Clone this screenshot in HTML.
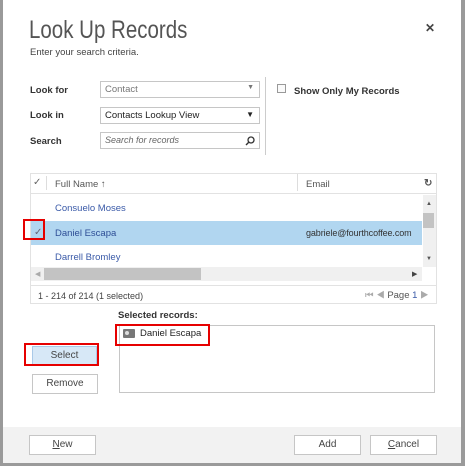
<!DOCTYPE html>
<html><head><style>
*{box-sizing:border-box;margin:0;padding:0}
body{width:465px;height:466px;background:#fff;font-family:"Liberation Sans",sans-serif;position:relative;overflow:hidden;color:#444}
.a{position:absolute}
.lbl{font-size:9.5px;font-weight:bold;color:#333}
.box{border:1px solid #c6c6c6;background:#fff;font-size:9.5px;padding:2px 4px}
.btn{border:1px solid #c6c6c6;background:#fff;font-size:10px;text-align:center;line-height:18px;color:#444}
.red{border:2px solid #e60000}
.row{font-size:9.5px;color:#3a5aa8;left:55px}
</style></head><body>
<div class="a" style="left:0;top:0;width:3px;height:466px;background:#9a9a9a"></div>
<div class="a" style="right:0;top:0;width:4px;height:466px;background:#9a9a9a"></div>
<div class="a" style="left:0;bottom:0;width:465px;height:3px;background:#9a9a9a"></div>
<div class="a" style="left:3px;top:427px;width:458px;height:36px;background:#f2f2f2"></div>

<div class="a" style="left:29px;top:16px;font-size:25px;color:#555;transform:scaleX(0.82);transform-origin:0 0;white-space:nowrap">Look Up Records</div>
<div class="a" style="left:30px;top:47px;font-size:9.5px;color:#444">Enter your search criteria.</div>
<div class="a" style="left:425px;top:21px;font-size:12px;color:#444;font-weight:bold">✕</div>

<div class="a lbl" style="left:30px;top:85px">Look for</div>
<div class="a lbl" style="left:30px;top:110px">Look in</div>
<div class="a lbl" style="left:30px;top:136px">Search</div>
<div class="a box" style="left:100px;top:81px;width:160px;height:17px;color:#777">Contact<span style="position:absolute;right:5px;top:2px;font-size:7px">▼</span></div>
<div class="a box" style="left:100px;top:107px;width:160px;height:17px;color:#222">Contacts Lookup View<span style="position:absolute;right:5px;top:2px;font-size:8px">▼</span></div>
<div class="a box" style="left:100px;top:132px;width:160px;height:17px;color:#666;font-style:italic;font-size:9px">Search for records
<svg style="position:absolute;right:4px;top:3px" width="10" height="10"><circle cx="6" cy="4" r="3" fill="none" stroke="#333" stroke-width="1.3"/><line x1="4" y1="6" x2="1" y2="9" stroke="#333" stroke-width="1.4"/></svg></div>
<div class="a" style="left:265px;top:77px;width:1px;height:78px;background:#ccc"></div>
<div class="a" style="left:277px;top:84px;width:9px;height:9px;border:1px solid #999;background:#fafafa"></div>
<div class="a lbl" style="left:294px;top:86px">Show Only My Records</div>

<div class="a" style="left:30px;top:173px;width:407px;height:131px;border:1px solid #e2e2e2"></div>
<div class="a" style="left:33px;top:177px;font-size:10px;color:#666">✓</div>
<div class="a" style="left:46px;top:176px;width:1px;height:14px;background:#ddd"></div>
<div class="a" style="left:55px;top:179px;font-size:9.5px;color:#555">Full Name ↑</div>
<div class="a" style="left:297px;top:174px;width:1px;height:17px;background:#ddd"></div>
<div class="a" style="left:306px;top:179px;font-size:9.5px;color:#555">Email</div>
<div class="a" style="left:424px;top:178px;font-size:10px;color:#555;font-weight:bold">↻</div>
<div class="a" style="left:31px;top:193px;width:405px;height:1px;background:#e2e2e2"></div>
<div class="a row" style="top:203px">Consuelo Moses</div>
<div class="a" style="left:31px;top:221px;width:391px;height:24px;background:#b1d6f0"></div>
<div class="a" style="left:34px;top:227px;font-size:10px;color:#667">✓</div>
<div class="a row" style="top:228px;color:#2e4e96">Daniel Escapa</div>
<div class="a" style="left:306px;top:228px;font-size:9px;color:#333;letter-spacing:-0.1px">gabriele@fourthcoffee.com</div>
<div class="a row" style="top:252px">Darrell Bromley</div>
<div class="a" style="left:423px;top:195px;width:13px;height:72px;background:#f0f0f0"></div>
<div class="a" style="left:423px;top:213px;width:11px;height:15px;background:#c3c3c3"></div>
<div class="a" style="left:426px;top:201px;font-size:6px;color:#555">▲</div>
<div class="a" style="left:426px;top:256px;font-size:6px;color:#555">▼</div>
<div class="a" style="left:31px;top:267px;width:391px;height:14px;background:#f0f0f0"></div>
<div class="a" style="left:44px;top:268px;width:157px;height:12px;background:#c3c3c3"></div>
<div class="a" style="left:35px;top:270px;font-size:7px;color:#aaa">◀</div>
<div class="a" style="left:412px;top:270px;font-size:7px;color:#444">▶</div>
<div class="a" style="left:31px;top:285px;width:405px;height:1px;background:#e2e2e2"></div>
<div class="a" style="left:38px;top:291px;font-size:9px;color:#444">1 - 214 of 214 (1 selected)</div>
<div class="a" style="left:365px;top:290px;font-size:9.5px;color:#aaa">⏮ ◀ <span style="color:#555">Page</span> <span style="color:#3a5aa8">1</span> ▶</div>

<div class="a red" style="left:23px;top:219px;width:22px;height:21px"></div>

<div class="a lbl" style="left:118px;top:310px;color:#333">Selected records:</div>
<div class="a" style="left:119px;top:325px;width:316px;height:68px;border:1px solid #c6c6c6"></div>
<div class="a" style="left:123px;top:329px;width:12px;height:9px;background:#777;border-radius:1px"></div>
<div class="a" style="left:125px;top:331px;width:4px;height:4px;background:#ddd;border-radius:2px"></div>
<div class="a" style="left:140px;top:328px;font-size:9.5px;color:#222">Daniel Escapa</div>
<div class="a red" style="left:115px;top:324px;width:95px;height:22px"></div>

<div class="a btn" style="left:32px;top:346px;width:65px;height:20px;background:#d7e8f7;border-color:#a9c9e8">Select</div>
<div class="a red" style="left:24px;top:343px;width:75px;height:23px"></div>
<div class="a btn" style="left:32px;top:374px;width:66px;height:20px">Remove</div>

<div class="a btn" style="left:29px;top:435px;width:67px;height:20px"><u>N</u>ew</div>
<div class="a btn" style="left:294px;top:435px;width:67px;height:20px">Add</div>
<div class="a btn" style="left:370px;top:435px;width:67px;height:20px"><u>C</u>ancel</div>
</body></html>
